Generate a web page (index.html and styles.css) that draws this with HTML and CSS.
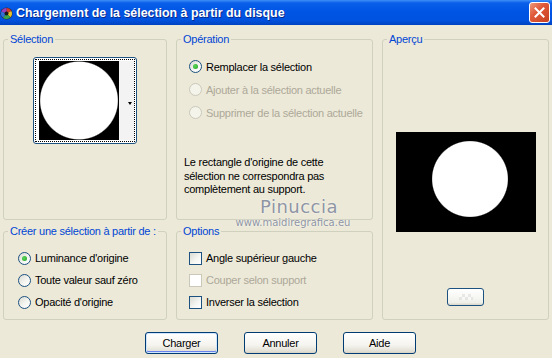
FILE: index.html
```html
<!DOCTYPE html>
<html lang="fr">
<head>
    <meta charset="UTF-8">
    <title>Chargement de la sélection à partir du disque</title>
    <link rel="stylesheet" href="styles.css">
</head>
<body>

<div class="window">
    <div class="titlebar">
        <svg class="app-icon" width="13" height="13" viewBox="0 0 13 13">
            <circle cx="6.5" cy="6.5" r="6" fill="#2b2b2b"/>
            <path d="M6.5 6.5 L6.5 1 A5.5 5.5 0 0 1 11.3 4 Z" fill="#d43b2a"/>
            <path d="M6.5 6.5 L11.3 4 A5.5 5.5 0 0 1 10.5 10.3 Z" fill="#e8c22a"/>
            <path d="M6.5 6.5 L10.5 10.3 A5.5 5.5 0 0 1 3 10.8 Z" fill="#3aa64a"/>
            <path d="M6.5 6.5 L3 10.8 A5.5 5.5 0 0 1 1.3 4.5 Z" fill="#2f6fd6"/>
            <path d="M6.5 6.5 L1.3 4.5 A5.5 5.5 0 0 1 6.5 1 Z" fill="#9a3fbf"/>
            <circle cx="6.5" cy="6.5" r="2" fill="#1a1a1a"/>
        </svg>
        <span class="title">Chargement de la sélection à partir du disque</span>
        <button class="close-btn">
            <svg width="11" height="11" viewBox="0 0 11 11">
                <path d="M1.5 1.5 L9.5 9.5 M9.5 1.5 L1.5 9.5" stroke="#fff" stroke-width="2" stroke-linecap="square"/>
            </svg>
        </button>
    </div>

    <div class="client">
        <div class="groups">
            <fieldset class="group group-sel">
                <legend>Sélection</legend>
                <div class="thumb">
                    <div class="thumb-inner">
                        <div class="thumb-img"></div>
                        <div class="thumb-side"><span class="thumb-arrow"></span></div>
                    </div>
                </div>
            </fieldset>

            <fieldset class="group group-op">
                <legend>Opération</legend>
                <div class="rows">
                    <label class="row"><span class="radio checked"></span>Remplacer la sélection</label>
                    <label class="row disabled"><span class="radio"></span>Ajouter à la sélection actuelle</label>
                    <label class="row disabled"><span class="radio"></span>Supprimer de la sélection actuelle</label>
                </div>
                <p class="note">Le rectangle d'origine de cette<br>sélection ne correspondra pas<br>complètement au support.</p>
            </fieldset>

            <fieldset class="group group-preview">
                <legend>Aperçu</legend>
                <div class="preview-img"></div>
                <button class="mini-btn"><span class="mini-pattern"></span></button>
            </fieldset>

            <fieldset class="group group-create">
                <legend>Créer une sélection à partir de :</legend>
                <div class="rows rows-tight">
                    <label class="row"><span class="radio checked"></span>Luminance d'origine</label>
                    <label class="row"><span class="radio"></span>Toute valeur sauf zéro</label>
                    <label class="row"><span class="radio"></span>Opacité d'origine</label>
                </div>
            </fieldset>

            <fieldset class="group group-options">
                <legend>Options</legend>
                <div class="rows rows-tight">
                    <label class="row"><span class="check"></span>Angle supérieur gauche</label>
                    <label class="row disabled"><span class="check"></span>Couper selon support</label>
                    <label class="row"><span class="check"></span>Inverser la sélection</label>
                </div>
            </fieldset>
        </div>

        <div class="actions">
            <button class="btn default">Charger</button>
            <button class="btn">Annuler</button>
            <button class="btn">Aide</button>
        </div>

        <div class="watermark">
            <div class="wm-name">Pinuccia</div>
            <div class="wm-url">www.maidiregrafica.eu</div>
        </div>
    </div>
</div>

</body>
</html>
```

FILE: styles.css
```css
/* General Styles */
body {
    margin: 0;
    font-family: 'Liberation Sans', Arial, sans-serif;
    font-size: 11px;
    letter-spacing: -0.25px;
    color: #000;
    background-color: #ece9d8;
}

.window {
    width: 552px;
    height: 358px;
    overflow: hidden;
    background-color: #ece9d8;
}

/* Title bar */
.titlebar {
    height: 25px;
    display: flex;
    align-items: center;
    background: linear-gradient(#3d8ff7 0%, #0a5fe9 12%, #0055e5 45%, #0052df 80%, #0043c0 100%);
}

.app-icon {
    margin: 1px 3px 0 0;
    flex: none;
}

.title {
    flex: 1;
    color: #fff;
    font-weight: bold;
    font-size: 12.4px;
    letter-spacing: 0;
    text-shadow: 1px 1px 0 #0a2a8a;
    white-space: nowrap;
}

.close-btn {
    width: 21px;
    height: 21px;
    margin-right: 2px;
    padding: 0;
    display: flex;
    align-items: center;
    justify-content: center;
    border: 1px solid #fff;
    border-radius: 3px;
    background: linear-gradient(135deg, #ec9a7c 0%, #e0593a 40%, #c8401e 100%);
}

/* Client area */
.client {
    position: relative;
    padding: 8px 3px 0 3px;
}

.groups {
    display: grid;
    grid-template-columns: 164px 197px 167px;
    grid-template-rows: 187px 95px;
    column-gap: 9px;
    row-gap: 5px;
}

.group {
    margin: 0;
    padding: 0;
    min-width: 0;
    border: 1px solid #d0d0bf;
    border-radius: 3px;
    box-sizing: border-box;
}

.group legend {
    margin-left: 4px;
    padding: 0 2px;
    color: #0046d5;
    line-height: 13px;
    white-space: nowrap;
}

.group-preview {
    grid-column: 3;
    grid-row: 1 / 3;
    display: flex;
    flex-direction: column;
    align-items: center;
}

/* Selection thumbnail */
.thumb {
    width: 100px;
    height: 83px;
    margin: 11px auto 0;
    padding: 1px;
    border: 1px solid #1c5180;
    border-radius: 3px;
    background-color: #fff;
}

.thumb-inner {
    height: 100%;
    display: flex;
    border: 1px dotted #000;
    box-sizing: border-box;
    padding: 1px 0 1px 3px;
    background-color: #fff;
}

.thumb-img {
    flex: 0 0 80px;
    background: radial-gradient(circle closest-side, #fff 97%, #000 100%);
    background-color: #000;
}

.thumb-side {
    flex: 1;
    display: flex;
    align-items: center;
    justify-content: flex-end;
    background-color: #f3f3f3;
    padding-right: 2px;
}

.thumb-arrow {
    width: 0;
    height: 0;
    border-left: 2px solid transparent;
    border-right: 2px solid transparent;
    border-top: 3px solid #000;
    margin-top: 6px;
}

/* Radio and check rows */
.rows {
    padding: 9px 0 0 12px;
}

.row {
    height: 23px;
    display: flex;
    align-items: center;
    gap: 4px;
    white-space: nowrap;
}

.rows-tight .row {
    height: 22px;
}

.group-create .rows {
    padding-left: 14px;
}

.row.disabled {
    color: #aca899;
}

.radio {
    width: 11px;
    height: 11px;
    flex: none;
    border: 1px solid #1c5180;
    border-radius: 50%;
    background: linear-gradient(135deg, #dcdcd5 0%, #f6f6f3 60%, #ffffff 100%);
    position: relative;
}

.radio.checked::after {
    content: '';
    position: absolute;
    left: 3px;
    top: 3px;
    width: 5px;
    height: 5px;
    border-radius: 50%;
    background: radial-gradient(circle at 40% 40%, #5cd65c, #21a121);
}

.disabled .radio {
    border-color: #cac8bb;
    background: #f5f4ea;
}

.check {
    width: 11px;
    height: 11px;
    flex: none;
    border: 1px solid #1c5180;
    background: linear-gradient(135deg, #dcdcd5 0%, #f6f6f3 60%, #ffffff 100%);
}

.disabled .check {
    border-color: #cac8bb;
    background: #fff;
}

.note {
    margin: 32px 0 0 7px;
    line-height: 13.5px;
}

/* Preview */
.preview-img {
    width: 140px;
    height: 100px;
    margin-top: 86px;
    background: radial-gradient(circle 38.5px at 74px 47px, #fff 97%, #000 100%);
}

.mini-btn {
    width: 37px;
    height: 18px;
    margin-top: 56px;
    padding: 0;
    border: 1px solid #1c5180;
    border-radius: 3px;
    background: linear-gradient(#ffffff, #f0f0ea 85%, #d8d5c8);
    display: flex;
    align-items: center;
    justify-content: center;
}

.mini-pattern {
    width: 14px;
    height: 6px;
    opacity: 0.35;
    background: repeating-conic-gradient(#c9c9c9 0 25%, #fff 0 50%) 0 0 / 6px 6px;
}

/* Buttons */
.actions {
    display: flex;
    gap: 26px;
    margin-top: 12px;
    padding-left: 142px;
}

.btn {
    width: 73px;
    height: 22px;
    padding: 0;
    font-family: 'Liberation Sans', Arial, sans-serif;
    font-size: 11px;
    letter-spacing: -0.25px;
    color: #000;
    border: 1px solid #003c74;
    border-radius: 3px;
    background: linear-gradient(#ffffff 0%, #f5f4ef 60%, #e3e1d6 90%, #d6d0c5 100%);
}

.btn.default {
    box-shadow: inset 0 0 0 1px #cee7ff, inset 0 -1px 0 1px #6982ee;
}

/* Watermark over the dialog */
.watermark {
    position: absolute;
    left: 228px;
    top: 171px;
    width: 130px;
    text-align: center;
    color: #8f95a3;
    text-shadow: 0 0 2px #fff;
    pointer-events: none;
}

.wm-name {
    font-family: 'DejaVu Sans', sans-serif;
    font-size: 18px;
    letter-spacing: 0.5px;
    line-height: 21px;
    padding-left: 12px;
}

.wm-url {
    font-family: 'DejaVu Sans', sans-serif;
    font-size: 10px;
    letter-spacing: 0;
    line-height: 12px;
}
```
